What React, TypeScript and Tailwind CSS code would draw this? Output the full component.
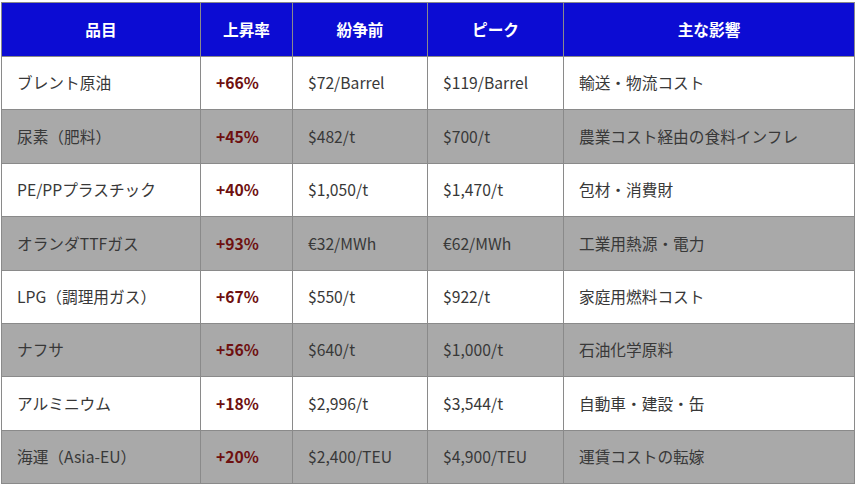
const rows = [
  ["ブレント原油", "+66%", "$72/Barrel", "$119/Barrel", "輸送・物流コスト"],
  ["尿素（肥料）", "+45%", "$482/t", "$700/t", "農業コスト経由の食料インフレ"],
  ["PE/PPプラスチック", "+40%", "$1,050/t", "$1,470/t", "包材・消費財"],
  ["オランダTTFガス", "+93%", "€32/MWh", "€62/MWh", "工業用熱源・電力"],
  ["LPG（調理用ガス）", "+67%", "$550/t", "$922/t", "家庭用燃料コスト"],
  ["ナフサ", "+56%", "$640/t", "$1,000/t", "石油化学原料"],
  ["アルミニウム", "+18%", "$2,996/t", "$3,544/t", "自動車・建設・缶"],
  ["海運（Asia-EU）", "+20%", "$2,400/TEU", "$4,900/TEU", "運賃コストの転嫁"],
];

const headers = ["品目", "上昇率", "紛争前", "ピーク", "主な影響"];
const widths = ["w-[199px]", "w-[92px]", "w-[135px]", "w-[136px]", "w-[291px]"];

export default function App() {
  return (
    <div
      className="w-[856px] h-[487px] bg-white pt-[2px] pl-[1px]"
      style={{ fontFamily: '"Noto Sans CJK JP", "Noto Sans", sans-serif' }}
    >
      <table className="w-[853px] border-collapse table-fixed text-[15.7px]">
        <thead>
          <tr className="h-[54px] bg-[#0c0cd3]">
            {headers.map((h, i) => (
              <th key={h} className={`${widths[i]} border border-[#8a8a8a] text-center font-bold text-white`}>
                {h}
              </th>
            ))}
          </tr>
        </thead>
        <tbody>
          {rows.map((r, ri) => (
            <tr key={r[0]} className={`h-[53.4px] ${ri % 2 ? "bg-[#a9a9a9]" : "bg-white"}`}>
              {r.map((c, ci) => (
                <td
                  key={ci}
                  className={`border border-[#8a8a8a] pl-[15px] ${
                    ci === 1 ? "font-bold text-[#6e1010]" : "text-[#383838]"
                  }`}
                >
                  {c}
                </td>
              ))}
            </tr>
          ))}
        </tbody>
      </table>
    </div>
  );
}
